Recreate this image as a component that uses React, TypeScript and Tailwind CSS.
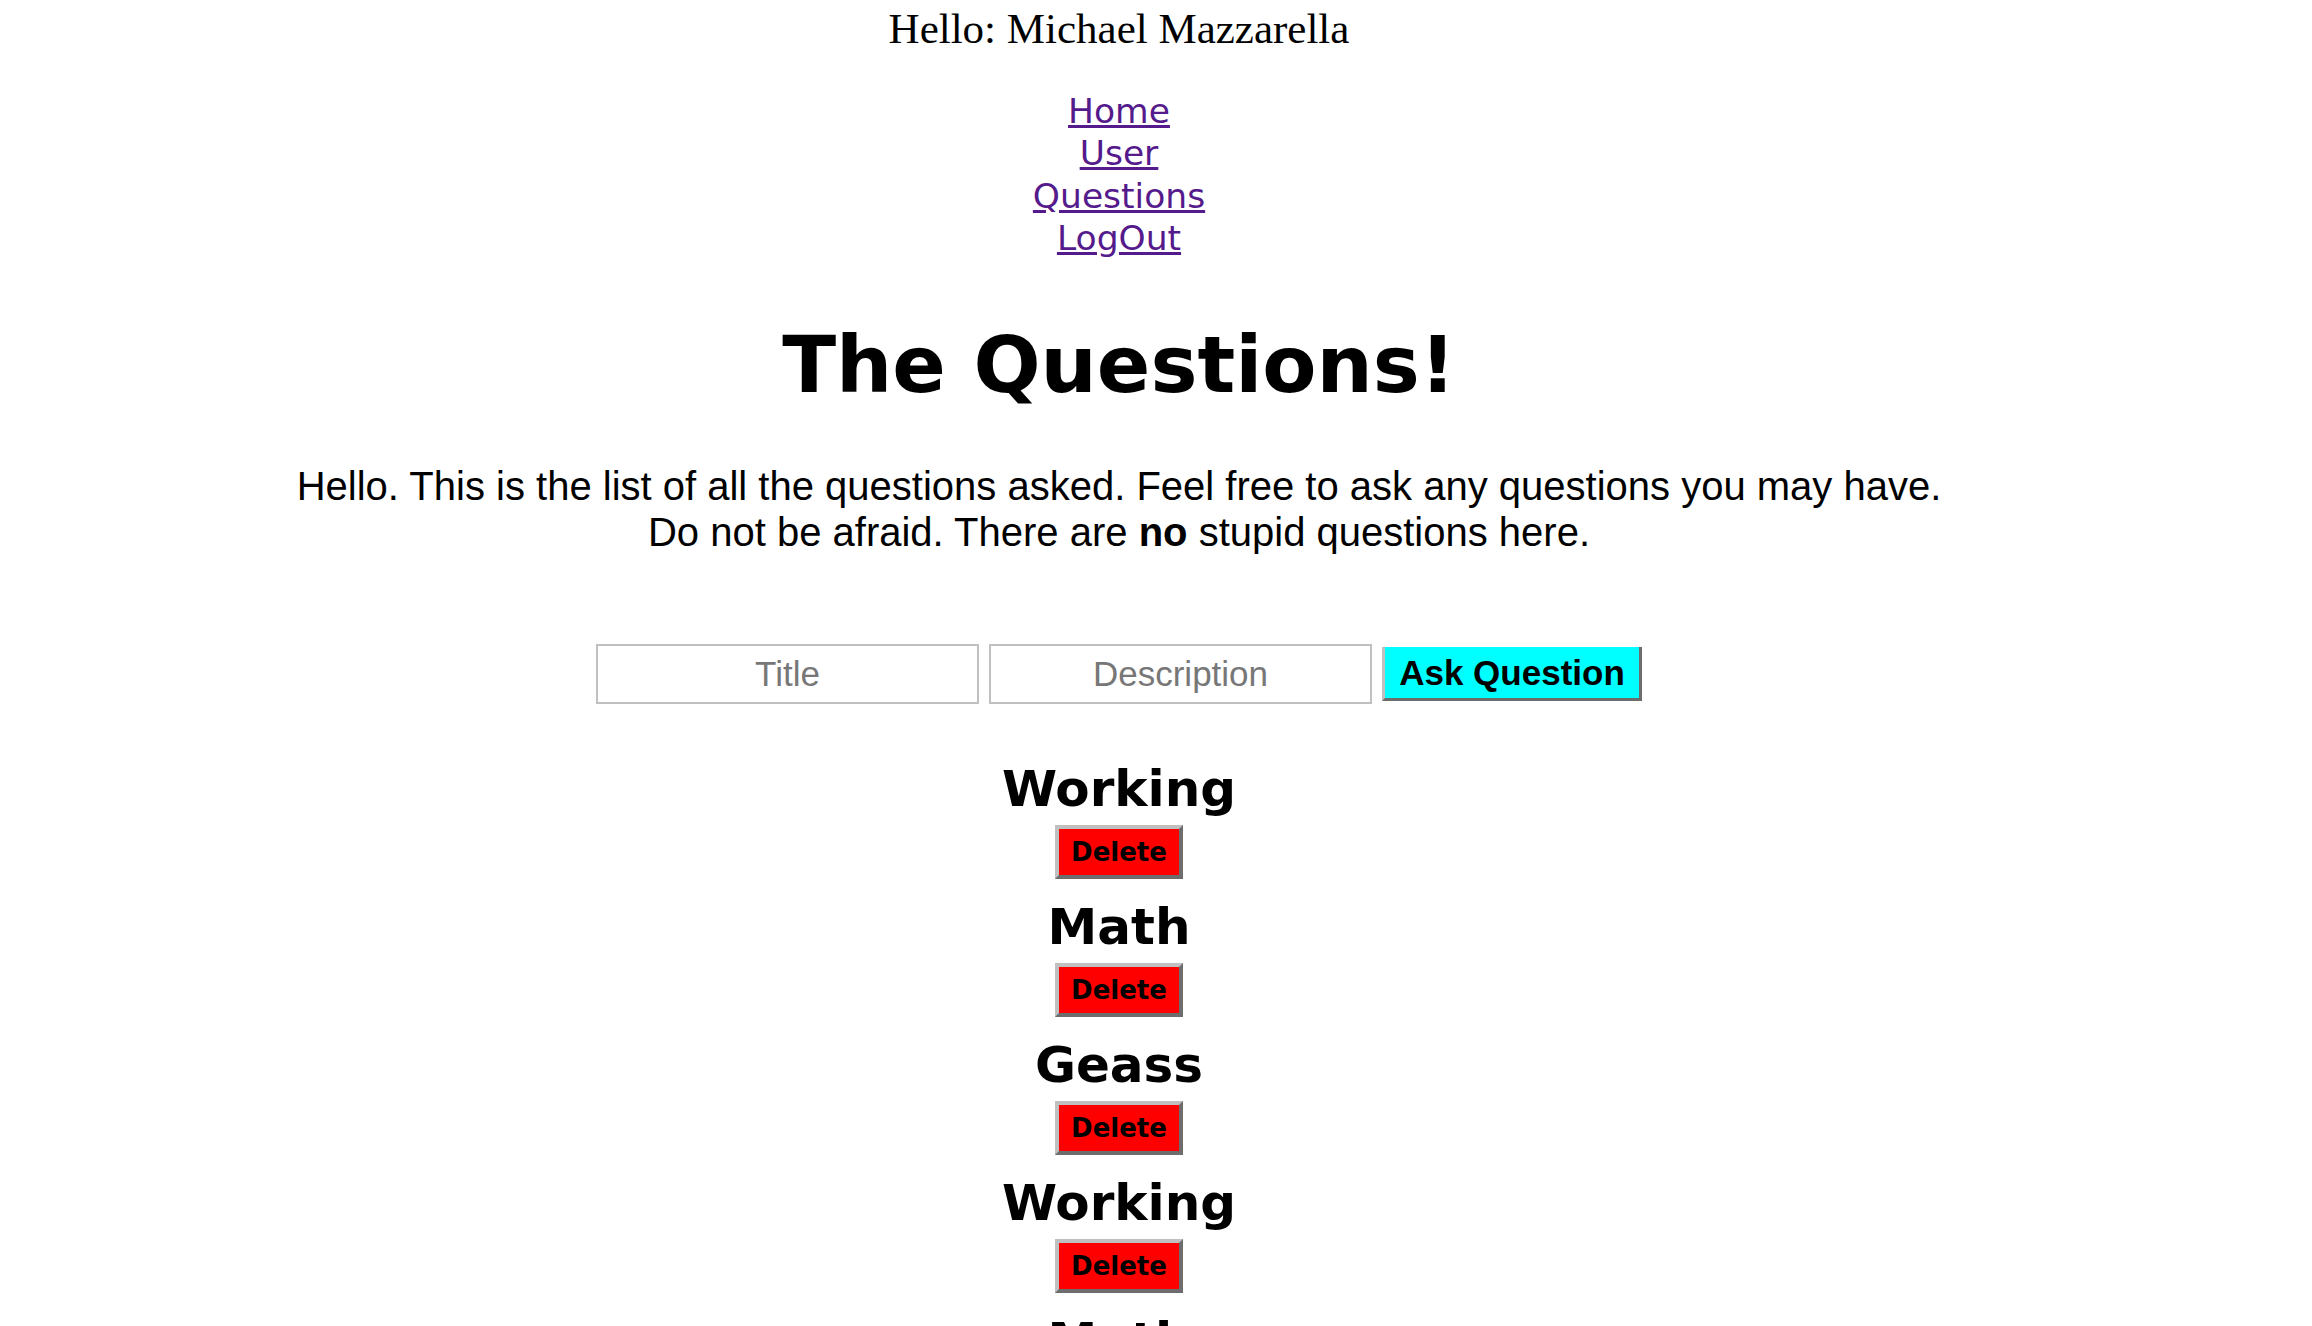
import React from "react";

const questions = ["Working", "Math", "Geass", "Working", "Math"];

const navLinks = ["Home", "User", "Questions", "LogOut"];

const App: React.FC = () => {
  return (
    <div className="w-[2238px] min-h-[1326px] bg-white text-black text-center">
      {/* Greeting */}
      <div className="font-['Liberation_Serif',serif] text-[43px] leading-[58px]">
        Hello: Michael Mazzarella
      </div>

      {/* Nav */}
      <nav className="mt-[32px] flex flex-col items-center font-['DejaVu_Sans',sans-serif] text-[34.5px] leading-[42.3px]">
        {navLinks.map((link) => (
          <a key={link} href="#" className="text-[#551a8b] underline">
            {link}
          </a>
        ))}
      </nav>

      <h1 className="mt-[59px] font-['DejaVu_Sans',sans-serif] font-bold text-[79px] leading-[94px]">
        The Questions!
      </h1>

      <p className="mt-[51px] font-['Liberation_Sans',Arial,sans-serif] text-[40px] leading-[46px]">
        Hello. This is the list of all the questions asked. Feel free to ask any questions you may have.
        <br />
        Do not be afraid. There are <b>no</b> stupid questions here.
      </p>

      {/* Ask form */}
      <div className="mt-[89px] flex items-center justify-center gap-[10px] font-['Liberation_Sans',Arial,sans-serif]">
        <input
          placeholder="Title"
          className="w-[383px] h-[60px] border-2 border-[#c0c0c0] text-center text-[35px] placeholder:text-[#777]"
        />
        <input
          placeholder="Description"
          className="w-[383px] h-[60px] border-2 border-[#c0c0c0] text-center text-[35px] placeholder:text-[#777]"
        />
        <button className="w-[260px] h-[54px] bg-[#00ffff] border-l-[3px] border-b-[3px] border-r-[3px] border-l-[#c0c0c0] border-b-[#6d6d6d] border-r-[#6d6d6d] font-bold text-[35px] leading-none">
          Ask Question
        </button>
      </div>

      {/* Questions list */}
      <div className="mt-[57px] flex flex-col items-center font-['DejaVu_Sans',sans-serif]">
        {questions.map((q, i) => (
          <div key={i} className="flex flex-col items-center">
            <h2 className="font-bold text-[50px] leading-[56px]">{q}</h2>
            <button className="mt-[8px] mb-[20px] w-[128px] h-[54px] bg-[#ff0000] border-4 border-t-[#c0c0c0] border-l-[#c0c0c0] border-b-[#6d6d6d] border-r-[#6d6d6d] font-bold text-[26px] leading-none">
              Delete
            </button>
          </div>
        ))}
      </div>
    </div>
  );
};

export default App;
